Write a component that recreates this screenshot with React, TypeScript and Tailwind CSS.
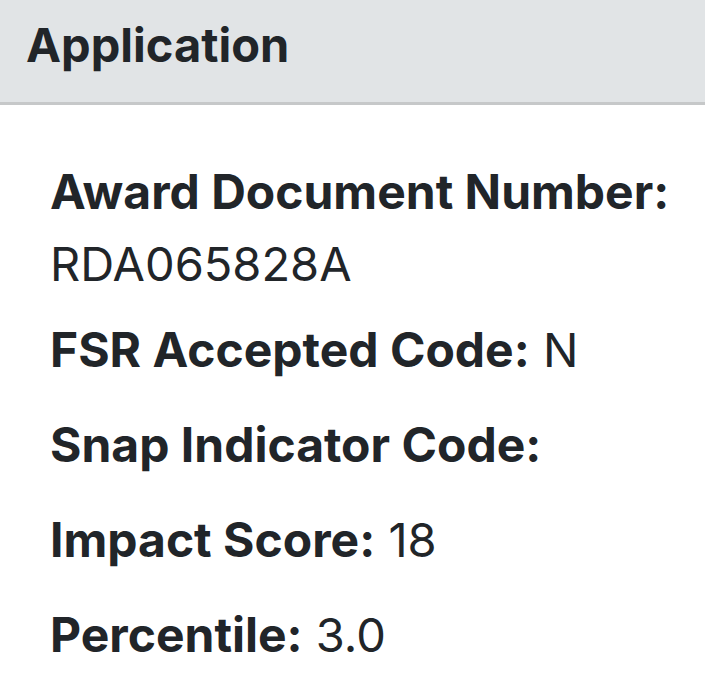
const fields = [
  { label: 'FSR Accepted Code:', value: 'N' },
  { label: 'Snap Indicator Code:', value: '' },
  { label: 'Impact Score:', value: '18' },
  { label: 'Percentile:', value: '3.0' },
];

export default function App() {
  return (
    <div className="w-[705px] h-[686px] bg-white text-[#212529] font-['Inter',sans-serif] overflow-hidden">
      <div className="h-[105px] bg-[#e1e4e6] border-b-[3px] border-[#c6c8c9] pl-[26px] pt-[15px]">
        <h1 className="text-[47px] font-bold leading-[60px]">Application</h1>
      </div>

      <div className="pl-[50px] pt-[51px] text-[48px] leading-[72px]">
        <div className="mb-[14px]">
          <div className="font-bold">Award Document Number:</div>
          <div className="text-[47px]">RDA065828A</div>
        </div>
        {fields.map((f, i) => (
          <div key={i} className="mb-[23px]">
            <span className="font-bold">{f.label}</span>
            {f.value && <span className="text-[47px]"> {f.value}</span>}
          </div>
        ))}
      </div>
    </div>
  );
}
